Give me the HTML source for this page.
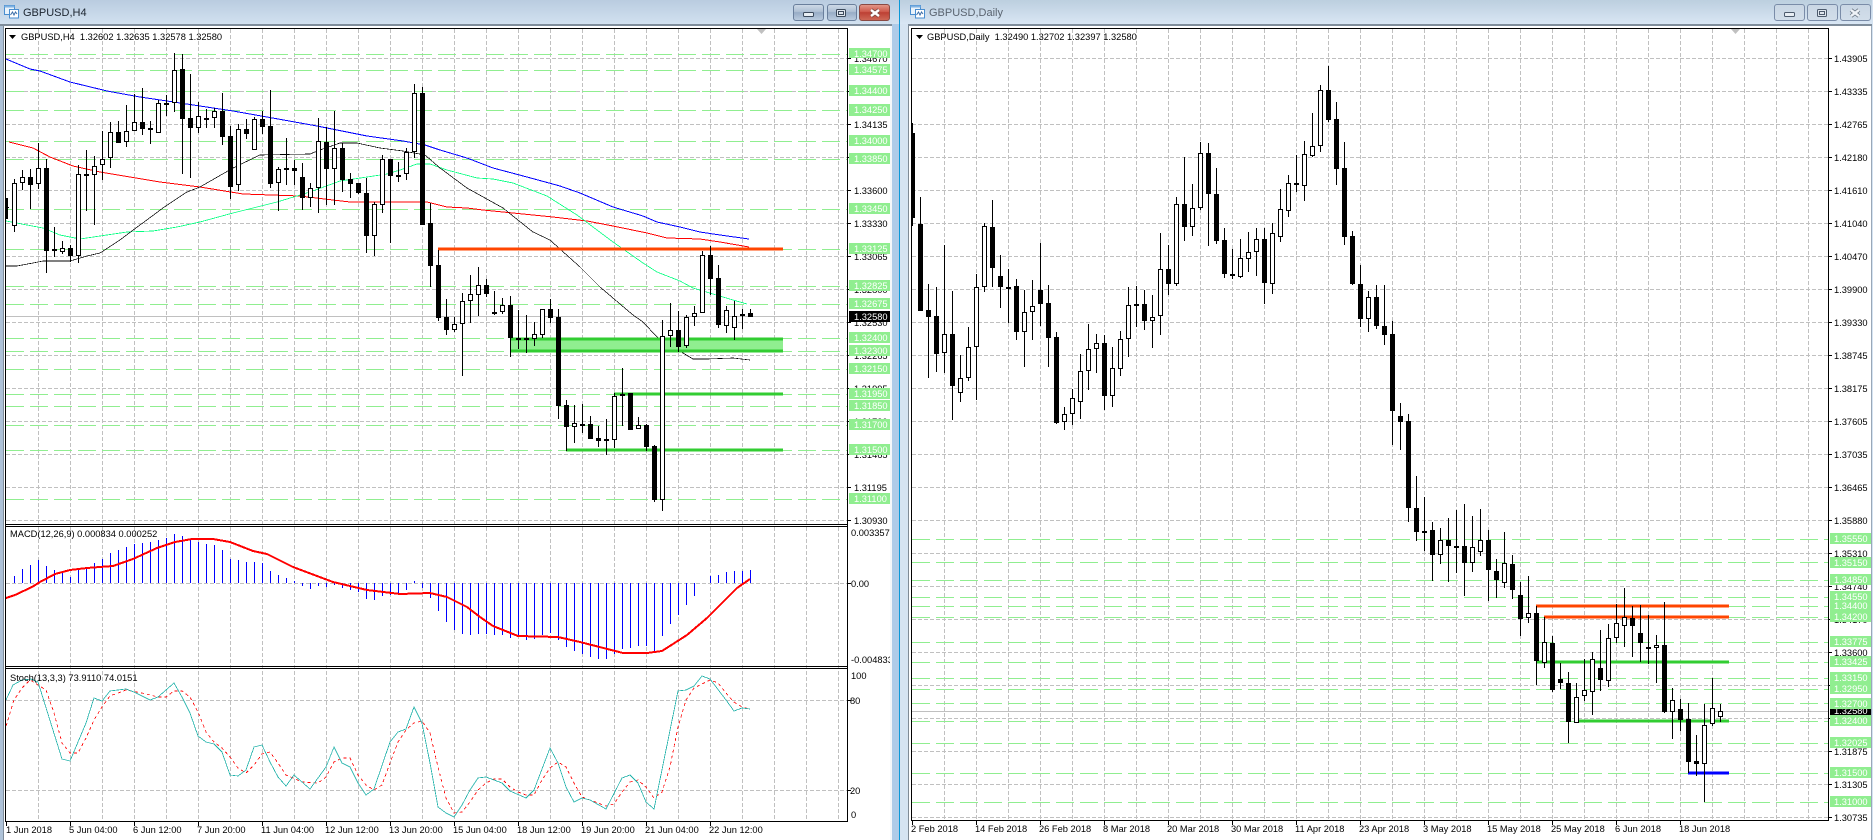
<!DOCTYPE html>
<html lang="en"><head><meta charset="utf-8"><title>GBPUSD charts</title>
<style>
html,body{margin:0;padding:0;background:#fff;width:1873px;height:840px;overflow:hidden}
svg{display:block;position:absolute;left:0;top:0}
text{font-family:"Liberation Sans",sans-serif;font-size:9.3px;fill:#000}
.t{font-size:11px;fill:#1c2530}
.ti{font-size:11px;fill:#5a6470}
.w{fill:#fff}
</style></head><body>
<svg width="1873" height="840" viewBox="0 0 1873 840" xmlns="http://www.w3.org/2000/svg">
<defs>
<linearGradient id="tb" x1="0" y1="0" x2="0" y2="1"><stop offset="0" stop-color="#b9cce0"/><stop offset="1" stop-color="#d2e1f0"/></linearGradient>
<linearGradient id="tb2" x1="0" y1="0" x2="0" y2="1"><stop offset="0" stop-color="#bccfdf"/><stop offset="1" stop-color="#d9e6f4"/></linearGradient>
<linearGradient id="ba" x1="0" y1="0" x2="0" y2="1"><stop offset="0" stop-color="#d0dbe8"/><stop offset=".45" stop-color="#aebfd3"/><stop offset=".5" stop-color="#97acc6"/><stop offset="1" stop-color="#bccde0"/></linearGradient>
<linearGradient id="bi" x1="0" y1="0" x2="0" y2="1"><stop offset="0" stop-color="#c9d6e4"/><stop offset="1" stop-color="#d2deea"/></linearGradient>
<linearGradient id="bc" x1="0" y1="0" x2="0" y2="1"><stop offset="0" stop-color="#e39a8c"/><stop offset=".45" stop-color="#cf5a4c"/><stop offset=".5" stop-color="#bd4034"/><stop offset="1" stop-color="#cf6a58"/></linearGradient>
</defs>

<rect width="1873" height="840" fill="#fff"/>

<!-- title bars -->
<rect x="0" y="0" width="900" height="24" fill="url(#tb)"/>
<rect x="900" y="0" width="973" height="24" fill="url(#tb2)"/>
<rect x="0" y="24" width="892" height="2" fill="#7f8d9b"/>
<rect x="908" y="24" width="964" height="2" fill="#7f8d9b"/>

<!-- left window grid -->
<g shape-rendering="crispEdges" fill="none" stroke-width="1">
<path stroke="#c0c0c0" stroke-dasharray="4 2" d="M38.5 29V821M70.5 29V821M102.5 29V821M134.5 29V821M166.5 29V821M198.5 29V821M230.5 29V821M262.5 29V821M294.5 29V821M326.5 29V821M358.5 29V821M390.5 29V821M422.5 29V821M454.5 29V821M486.5 29V821M518.5 29V821M550.5 29V821M582.5 29V821M614.5 29V821M646.5 29V821M678.5 29V821M710.5 29V821M742.5 29V821M774.5 29V821M806.5 29V821M838.5 29V821"/>
<path stroke="#c0c0c0" stroke-dasharray="4 2" d="M6 58.5H847M6 91.5H847M6 124.5H847M6 157.5H847M6 190.5H847M6 223.5H847M6 256.5H847M6 289.5H847M6 322.5H847M6 355.5H847M6 388.5H847M6 421.5H847M6 454.5H847M6 487.5H847M6 520.5H847M6 583.5H847M6 700.5H847M6 790.5H847"/>
<path stroke="#90ee90" stroke-dasharray="18 6" d="M6 54.5H847M6 70.5H847M6 91.5H847M6 110.5H847M6 141.5H847M6 159.5H847M6 209.5H847M6 249.5H847M6 286.5H847M6 304.5H847M6 338.5H847M6 351.5H847M6 369.5H847M6 394.5H847M6 406.5H847M6 425.5H847M6 450.5H847M6 499.5H847"/>
<path stroke="#c0c0c0" d="M6 316.5H847"/>

<!-- MAs left -->
<polyline stroke="#0000ff" points="6,59 30,69 40,71 70,82 107,91 140,97 167,101 200,106 233,111 267,117 317,126 367,136 403,141 425,145 440,150 467,158 493,168 527,177 560,186 580,193 613,207 643,216 657,222 680,227 700,232 720,235 749,239"/>
<polyline stroke="#ff0000" points="9,142 33,148 50,157 73,166 100,172 160,182 200,187 243,194 300,196 333,200 350,202 385,202 427,202 447,207 467,208 483,210 513,213 553,217 587,221 613,226 647,233 667,238 700,239 720,242 749,247"/>
<polyline stroke="#00ff7f" stroke-width=".8" points="6,221 27,225 43,228 60,235 80,239 100,236 127,232 153,231 177,227 200,222 233,213 277,202 310,192 340,181 367,177 387,174 400,170 417,164 430,164 447,170 477,178 493,179 513,183 547,196 577,215 613,242 643,263 657,272 680,281 693,288 733,300 747,304"/>
<polyline stroke="#000" stroke-width=".7" points="6,266 17,266 33,263 43,261 70,261 87,256 100,253 120,240 140,225 163,208 187,192 200,187 233,168 260,155 310,154 320,150 340,143 357,143 380,148 403,151 425,155 440,168 467,188 503,208 533,232 550,240 580,267 600,287 633,315 643,322 657,337 678,350 693,359 707,359 733,358 750,360"/>

<!-- objects left -->
<rect x="510" y="338" width="273" height="14" fill="#90ee90" stroke="none"/>
<path stroke="#32cd32" stroke-width="3" d="M510 339H783M510 351H783M614 394H783M566 450H783"/>
<path stroke="#ff4500" stroke-width="3" d="M438 249H783"/>

<!-- candles left -->
<rect x="6" y="198" width="2" height="21" fill="#000" stroke="none"/><rect x="6" y="207" width="3" height="1" fill="#000" stroke="none"/>
<path stroke="#000" d="M14.5 179V232M22.5 170V190M30.5 169V209M38.5 143V189M46.5 159V273M54.5 227V257M62.5 241V254M70.5 245V262M78.5 165V263M86.5 150V211M94.5 156V225M102.5 131V180M110.5 122V168M118.5 121V143M126.5 105V147M134.5 94V131M142.5 88V135M150.5 121V144M158.5 100V133M166.5 95V116M174.5 53V112M182.5 54V174M190.5 74V178M198.5 102V133M206.5 109V128M214.5 108V128M222.5 93V145M230.5 126V199M238.5 124V191M246.5 119V139M254.5 117V150M262.5 111V134M270.5 90V188M278.5 167V211M286.5 138V185M294.5 160V185M302.5 163V210M310.5 183V207M318.5 118V213M326.5 127V205M334.5 111V205M342.5 143V192M350.5 173V198M358.5 183V194M366.5 178V253M374.5 202V256M382.5 155V213M390.5 159V243M398.5 162V182M406.5 148V180M414.5 84V158M422.5 87V225M430.5 203V287M438.5 250V321M446.5 299V335M454.5 317V332M462.5 293V376M470.5 275V323M478.5 267V316M486.5 279V297M494.5 291V315M502.5 298V314M510.5 296V357M518.5 310V349M526.5 315V353M534.5 322V346M542.5 309V338M550.5 299V323M558.5 309V419M566.5 400V451M574.5 405V443M582.5 404V433M590.5 416V439M598.5 426V447M606.5 419V455M614.5 393V448M622.5 368V426M630.5 393V430M638.5 417V429M646.5 424V451M654.5 445V502M662.5 320V511M670.5 303V347M678.5 311V352M686.5 315V348M694.5 306V326M702.5 251V313M710.5 246V295M718.5 265V328M726.5 306V333M734.5 301V340M742.5 309V329M750.5 309V317"/>
<path stroke="#000" stroke-width="5" d="M30.5 177V185M46.5 168V251M70.5 248V256M86.5 174V176M118.5 132V143M142.5 122V129M182.5 69V119M190.5 118V128M222.5 111V137M230.5 136V187M246.5 129V134M262.5 119V127M270.5 126V184M286.5 168V170M294.5 168V171M302.5 177V198M326.5 142V169M342.5 148V180M350.5 179V184M358.5 183V193M366.5 193V236M390.5 159V176M422.5 93V225M430.5 223V266M438.5 265V318M446.5 317V330M486.5 285V294M510.5 305V338M550.5 309V318M558.5 317V406M566.5 405V427M590.5 424V439M598.5 438V441M606.5 439V441M630.5 393V430M646.5 425V447M654.5 446V500M678.5 330V347M710.5 255V279M718.5 278V325M750.5 313V317M54.5 249V251M150.5 128V130M166.5 103V105M206.5 118V120M398.5 175V177M494.5 312V314M518.5 338V340M526.5 338V340M582.5 424V426"/>
<path stroke="#000" fill="#fff" d="M12.5 183.5h4v42h-4zM20.5 177.5h4v5h-4zM36.5 168.5h4v15h-4zM60.5 248.5h4v3h-4zM76.5 174.5h4v81h-4zM92.5 166.5h4v8h-4zM100.5 159.5h4v5h-4zM108.5 132.5h4v25h-4zM124.5 131.5h4v10h-4zM132.5 122.5h4v8h-4zM156.5 103.5h4v29h-4zM172.5 70.5h4v32h-4zM196.5 116.5h4v11h-4zM212.5 111.5h4v6h-4zM236.5 129.5h4v55h-4zM252.5 119.5h4v30h-4zM276.5 169.5h4v13h-4zM308.5 188.5h4v9h-4zM316.5 141.5h4v46h-4zM332.5 148.5h4v20h-4zM372.5 204.5h4v31h-4zM380.5 159.5h4v45h-4zM404.5 152.5h4v21h-4zM412.5 93.5h4v58h-4zM452.5 324.5h4v5h-4zM460.5 301.5h4v22h-4zM468.5 294.5h4v6h-4zM476.5 285.5h4v9h-4zM500.5 305.5h4v6h-4zM532.5 334.5h4v4h-4zM540.5 309.5h4v25h-4zM572.5 423.5h4v3h-4zM612.5 396.5h4v43h-4zM620.5 394.5h4v1h-4zM636.5 425.5h4v3h-4zM660.5 336.5h4v163h-4zM668.5 330.5h4v5h-4zM684.5 317.5h4v28h-4zM692.5 313.5h4v3h-4zM700.5 255.5h4v57h-4zM724.5 310.5h4v15h-4zM732.5 316.5h4v11h-4zM740.5 314.5h4v1h-4z"/>

<!-- MACD -->
<path stroke="#0000ff" d="M14.5 583V576M22.5 583V569M30.5 583V565M38.5 583V560M46.5 583V566M54.5 583V570M62.5 583V573M70.5 583V577M78.5 583V568M86.5 583V568M94.5 583V563M102.5 583V559M110.5 583V553M118.5 583V550M126.5 583V547M134.5 583V544M142.5 583V543M150.5 583V542M158.5 583V540M166.5 583V538M174.5 583V534M182.5 583V536M190.5 583V540M198.5 583V542M206.5 583V544M214.5 583V545M222.5 583V550M230.5 583V559M238.5 583V560M246.5 583V562M254.5 583V562M262.5 583V563M270.5 583V571M278.5 583V575M286.5 583V578M294.5 583V581M302.5 583V586M310.5 583V589M318.5 583V586M326.5 583V587M334.5 583V585M342.5 583V588M350.5 583V590M358.5 583V592M366.5 583V599M374.5 583V600M382.5 583V596M390.5 583V595M398.5 583V594M406.5 583V590M414.5 583V581M422.5 583V588M430.5 583V598M438.5 583V611M446.5 583V622M454.5 583V630M462.5 583V634M470.5 583V635M478.5 583V634M486.5 583V634M494.5 583V635M502.5 583V635M510.5 583V638M518.5 583V637M526.5 583V640M534.5 583V639M542.5 583V635M550.5 583V633M558.5 583V640M566.5 583V647M574.5 583V651M582.5 583V654M590.5 583V657M598.5 583V659M606.5 583V659M614.5 583V654M622.5 583V649M630.5 583V648M638.5 583V646M646.5 583V646M654.5 583V652M662.5 583V636M670.5 583V624M678.5 583V615M686.5 583V605M694.5 583V596M710.5 583V576M718.5 583V575M726.5 583V572M734.5 583V571M742.5 583V571M750.5 583V570"/>
<polyline stroke="#ff0000" stroke-width="2" points="6,598 15,595 32,587 40,582 55,574 70,570 87,568 113,566 133,559 157,548 175,542 192,539 213,539 230,542 253,551 267,554 293,567 333,582 367,590 400,594 430,593 447,597 467,607 480,617 493,626 518,636 558,637 580,642 623,653 647,653 662,651 687,635 707,618 737,588 750,579"/>

<!-- Stoch -->
<polyline stroke="#ff0000" stroke-dasharray="3 3" stroke-width=".8" points="6,726 14,700 22,688 30,680 46,690 54,713 62,743 70,753 78,753 86,738 94,720 102,707 110,696 118,693 126,690 142,693 158,697 166,697 174,691 182,691 190,697 198,712 206,732 214,742 222,748 230,757 238,768 246,773 254,765 262,754 270,752 278,763 286,775 302,782 318,783 326,777 334,762 342,758 350,758 358,775 366,785 374,790 382,785 390,763 398,742 406,730 414,723 422,721 430,733 438,767 446,798 454,813 462,812 470,802 478,790 486,783 494,779 502,779 510,787 518,792 526,795 534,795 542,780 550,768 558,762 566,767 574,783 582,797 590,800 606,806 614,804 622,792 630,782 638,780 646,787 654,798 662,792 670,767 678,727 686,700 694,688 702,684 710,680 718,683 726,693 734,702 742,707 750,709"/>
<polyline stroke="#20b2aa" stroke-width=".8" points="6,700 13,685 22,680 31,679 38,682 62,759 70,761 86,723 94,698 102,701 110,691 126,689 134,692 150,700 158,697 174,683 182,697 190,713 198,736 206,742 214,744 222,752 230,775 238,776 246,770 254,747 262,745 270,762 278,777 286,786 294,775 302,782 310,789 326,767 334,747 342,763 350,767 358,783 366,795 374,789 390,742 398,732 406,729 414,707 422,723 430,763 438,807 446,813 454,817 462,805 470,790 478,778 486,777 502,783 510,791 526,798 534,790 550,748 558,763 566,787 574,802 582,798 590,800 606,809 622,778 630,775 638,783 646,802 654,809 678,691 686,690 694,686 702,676 710,679 726,700 734,711 742,708 750,709"/>

<!-- left frame -->
<path stroke="#000" d="M5.5 28.5H847.5V821M5.5 28V821.5H848M5 524.5H848M5 526.5H848M5 666.5H848M5 668.5H848"/>
<path stroke="#000" d="M848 58.5h3M848 91.5h3M848 124.5h3M848 157.5h3M848 190.5h3M848 223.5h3M848 256.5h3M848 289.5h3M848 322.5h3M848 355.5h3M848 388.5h3M848 421.5h3M848 454.5h3M848 487.5h3M848 520.5h3M848 583.5h3M848 700.5h3M848 790.5h3M6.5 822v4M70.5 822v4M134.5 822v4M198.5 822v4M262.5 822v4M326.5 822v4M390.5 822v4M454.5 822v4M518.5 822v4M582.5 822v4M646.5 822v4M710.5 822v4"/>
</g>
<polygon points="757,29 766,29 761.5,34" fill="#c0c0c0"/>
<polygon points="9,35 16,35 12.5,39" fill="#000"/>
<text x="21" y="40">GBPUSD,H4&#160;&#160;1.32602 1.32635 1.32578 1.32580</text>
<text x="10" y="537">MACD(12,26,9) 0.000834 0.000252</text>
<text x="10" y="681">Stoch(13,3,3) 73.9110 74.0151</text>

<!-- left axis black labels -->
<g>
<text x="854" y="62">1.34670</text><text x="854" y="95">1.34400</text><text x="854" y="128">1.34135</text><text x="854" y="161">1.33870</text><text x="854" y="194">1.33600</text><text x="854" y="227">1.33330</text><text x="854" y="260">1.33065</text><text x="854" y="293">1.32800</text><text x="854" y="326">1.32530</text><text x="854" y="359">1.32265</text><text x="854" y="392">1.31995</text><text x="854" y="425">1.31730</text><text x="854" y="458">1.31465</text><text x="854" y="491">1.31195</text><text x="854" y="524">1.30930</text>
<text x="851" y="536">0.003357</text><text x="851" y="587">0.00</text><text x="851" y="663">-0.004833</text>
<text x="851" y="679">100</text><text x="850" y="704">80</text><text x="850" y="794">20</text><text x="851" y="818">0</text>
</g>
<!-- left green boxes -->
<g fill="#90ee90" shape-rendering="crispEdges">
<rect x="849" y="48" width="41" height="10"/><rect x="849" y="64" width="41" height="11"/><rect x="849" y="85" width="41" height="11"/><rect x="849" y="104" width="41" height="12"/><rect x="849" y="135" width="41" height="11"/><rect x="849" y="153" width="41" height="11"/><rect x="849" y="203" width="41" height="11"/><rect x="849" y="243" width="41" height="11"/><rect x="849" y="280" width="41" height="11"/><rect x="849" y="298" width="41" height="11"/><rect x="849" y="332" width="41" height="11"/><rect x="849" y="345" width="41" height="11"/><rect x="849" y="363" width="41" height="11"/><rect x="849" y="388" width="41" height="11"/><rect x="849" y="400" width="41" height="11"/><rect x="849" y="419" width="41" height="11"/><rect x="849" y="444" width="41" height="11"/><rect x="849" y="493" width="41" height="11"/>
</g>
<g class="w">
<text class="w" x="854" y="57">1.34700</text><text class="w" x="854" y="73">1.34575</text><text class="w" x="854" y="94">1.34400</text><text class="w" x="854" y="113">1.34250</text><text class="w" x="854" y="144">1.34000</text><text class="w" x="854" y="162">1.33850</text><text class="w" x="854" y="212">1.33450</text><text class="w" x="854" y="252">1.33125</text><text class="w" x="854" y="289">1.32825</text><text class="w" x="854" y="307">1.32675</text><text class="w" x="854" y="341">1.32400</text><text class="w" x="854" y="354">1.32300</text><text class="w" x="854" y="372">1.32150</text><text class="w" x="854" y="397">1.31950</text><text class="w" x="854" y="409">1.31850</text><text class="w" x="854" y="428">1.31700</text><text class="w" x="854" y="453">1.31500</text><text class="w" x="854" y="502">1.31100</text>
</g>
<rect x="849" y="311" width="41" height="11" fill="#000"/>
<text class="w" x="854" y="320">1.32580</text>
<g>
<text x="6" y="833">1 Jun 2018</text><text x="69" y="833">5 Jun 04:00</text><text x="133" y="833">6 Jun 12:00</text><text x="197" y="833">7 Jun 20:00</text><text x="261" y="833">11 Jun 04:00</text><text x="325" y="833">12 Jun 12:00</text><text x="389" y="833">13 Jun 20:00</text><text x="453" y="833">15 Jun 04:00</text><text x="517" y="833">18 Jun 12:00</text><text x="581" y="833">19 Jun 20:00</text><text x="645" y="833">21 Jun 04:00</text><text x="709" y="833">22 Jun 12:00</text>
</g>

<!-- RIGHT chart -->
<g shape-rendering="crispEdges" fill="none" stroke-width="1">
<path stroke="#c0c0c0" stroke-dasharray="4 2" d="M944.5 29V820M976.5 29V820M1008.5 29V820M1040.5 29V820M1072.5 29V820M1104.5 29V820M1136.5 29V820M1168.5 29V820M1200.5 29V820M1232.5 29V820M1264.5 29V820M1296.5 29V820M1328.5 29V820M1360.5 29V820M1392.5 29V820M1424.5 29V820M1456.5 29V820M1488.5 29V820M1520.5 29V820M1552.5 29V820M1584.5 29V820M1616.5 29V820M1648.5 29V820M1680.5 29V820M1712.5 29V820M1744.5 29V820M1776.5 29V820M1808.5 29V820"/>
<path stroke="#c0c0c0" stroke-dasharray="4 2" d="M912 58.5H1828M912 91.5H1828M912 124.5H1828M912 157.5H1828M912 190.5H1828M912 223.5H1828M912 256.5H1828M912 289.5H1828M912 322.5H1828M912 355.5H1828M912 388.5H1828M912 421.5H1828M912 454.5H1828M912 487.5H1828M912 520.5H1828M912 553.5H1828M912 586.5H1828M912 619.5H1828M912 652.5H1828M912 685.5H1828M912 718.5H1828M912 751.5H1828M912 784.5H1828M912 817.5H1828"/>
<path stroke="#90ee90" stroke-dasharray="18 6" d="M912 539.5H1828M912 562.5H1828M912 580.5H1828M912 597.5H1828M912 606.5H1828M912 617.5H1828M912 642.5H1828M912 662.5H1828M912 678.5H1828M912 689.5H1828M912 703.5H1828M912 721.5H1828M912 743.5H1828M912 773.5H1828M912 802.5H1828"/>
<path stroke="#c0c0c0" d="M912 711.5H1828"/>
<path stroke="#ff4500" stroke-width="3" d="M1536 606H1729M1544 617H1729"/>
<path stroke="#32cd32" stroke-width="3" d="M1536 662H1729M1576 721H1729"/>
<path stroke="#0000ff" stroke-width="3" d="M1688 773H1729"/>

<path stroke="#000" d="M912.5 123V226M920.5 197V311M928.5 284V378M936.5 287V372M944.5 245V373M952.5 291V420M960.5 355V402M968.5 327V381M976.5 274V400M984.5 223V292M992.5 200V287M1000.5 255V308M1008.5 269V323M1016.5 279V340M1024.5 290V367M1032.5 280V340M1040.5 243V326M1048.5 285V367M1056.5 332V424M1064.5 407V430M1072.5 389V425M1080.5 354V419M1088.5 324V390M1096.5 334V373M1104.5 335V410M1112.5 347V407M1120.5 331V376M1128.5 287V357M1136.5 286V327M1144.5 290V330M1152.5 295V348M1160.5 233V335M1168.5 245V295M1176.5 197V286M1184.5 157V241M1192.5 184V236M1200.5 142V210M1208.5 143V246M1216.5 168V244M1224.5 228V278M1232.5 249V279M1240.5 239V278M1248.5 232V272M1256.5 228V276M1264.5 228V304M1272.5 223V294M1280.5 189V242M1288.5 175V217M1296.5 155V192M1304.5 141V201M1312.5 113V157M1320.5 85V152M1328.5 66V122M1336.5 102V185M1344.5 142V245M1352.5 231V285M1360.5 265V327M1368.5 291V332M1376.5 285V329M1384.5 285V345M1392.5 321V445M1400.5 403V450M1408.5 414V522M1416.5 476V541M1424.5 497V551M1432.5 522V581M1440.5 528V564M1448.5 518V582M1456.5 510V573M1464.5 504V596M1472.5 516V572M1480.5 509V556M1488.5 530V601M1496.5 559V598M1504.5 532V588M1512.5 555V599M1520.5 582V636M1528.5 576V623M1536.5 606V685M1544.5 617V668M1552.5 636V692M1560.5 663V689M1568.5 672V743M1576.5 683V723M1584.5 659V701M1592.5 652V715M1600.5 630V691M1608.5 624V687M1616.5 604V643M1624.5 588V647M1632.5 606V657M1640.5 605V662M1648.5 615V664M1656.5 635V683M1664.5 602V713M1672.5 688V739M1680.5 699V731M1688.5 703V773M1696.5 735V776M1704.5 704V802M1712.5 678V726M1720.5 704V722"/>
<rect x="912" y="133" width="3" height="85" fill="#000" stroke="none"/>
<path stroke="#000" stroke-width="5" d="M920.5 224V311M928.5 310V317M936.5 316V354M952.5 334V386M992.5 227V268M1000.5 276V287M1016.5 286V332M1040.5 290V304M1048.5 303V338M1056.5 337V423M1104.5 343V396M1144.5 304V321M1168.5 269V284M1184.5 204V227M1208.5 153V194M1216.5 194V241M1224.5 240V274M1264.5 239V283M1328.5 90V120M1336.5 119V169M1344.5 168V237M1352.5 236V284M1360.5 284V319M1376.5 297V326M1384.5 326V335M1392.5 334V411M1400.5 416V422M1408.5 421V508M1416.5 508V532M1432.5 530V555M1448.5 540V546M1464.5 546V563M1488.5 540V570M1496.5 571V580M1512.5 564V590M1520.5 595V619M1536.5 613V661M1552.5 643V690M1560.5 679V683M1568.5 683V722M1600.5 668V680M1632.5 618V626M1640.5 633V643M1664.5 645V712M1680.5 709V720M1688.5 719V762M1696.5 761V764M1008.5 287V289M1136.5 304V306M1232.5 274V276M1296.5 183V185M1424.5 531V533M1456.5 546V548M1648.5 647V649"/>
<path stroke="#000" fill="#fff" d="M942.5 334.5h4v18h-4zM958.5 378.5h4v14h-4zM966.5 347.5h4v30h-4zM974.5 287.5h4v59h-4zM982.5 226.5h4v60h-4zM1022.5 312.5h4v19h-4zM1030.5 306.5h4v5h-4zM1062.5 414.5h4v7h-4zM1070.5 398.5h4v15h-4zM1078.5 371.5h4v30h-4zM1086.5 349.5h4v21h-4zM1094.5 343.5h4v5h-4zM1110.5 368.5h4v27h-4zM1118.5 339.5h4v29h-4zM1126.5 305.5h4v33h-4zM1150.5 317.5h4v3h-4zM1158.5 269.5h4v46h-4zM1174.5 204.5h4v79h-4zM1190.5 208.5h4v18h-4zM1198.5 153.5h4v54h-4zM1238.5 258.5h4v18h-4zM1246.5 252.5h4v6h-4zM1254.5 239.5h4v12h-4zM1270.5 233.5h4v50h-4zM1278.5 209.5h4v27h-4zM1286.5 183.5h4v27h-4zM1302.5 154.5h4v31h-4zM1310.5 146.5h4v9h-4zM1318.5 90.5h4v55h-4zM1366.5 297.5h4v21h-4zM1438.5 540.5h4v14h-4zM1470.5 547.5h4v15h-4zM1478.5 540.5h4v11h-4zM1502.5 563.5h4v19h-4zM1526.5 613.5h4v4h-4zM1542.5 642.5h4v20h-4zM1574.5 697.5h4v25h-4zM1582.5 690.5h4v5h-4zM1590.5 659.5h4v32h-4zM1606.5 638.5h4v42h-4zM1614.5 623.5h4v14h-4zM1622.5 617.5h4v8h-4zM1654.5 645.5h4v2h-4zM1670.5 700.5h4v11h-4zM1702.5 725.5h4v38h-4zM1710.5 708.5h4v15h-4zM1718.5 711.5h4v5h-4z"/>

<path stroke="#000" d="M911.5 28.5H1828.5V820.5H911.5ZM1829 58.5h3M1829 91.5h3M1829 124.5h3M1829 157.5h3M1829 190.5h3M1829 223.5h3M1829 256.5h3M1829 289.5h3M1829 322.5h3M1829 355.5h3M1829 388.5h3M1829 421.5h3M1829 454.5h3M1829 487.5h3M1829 520.5h3M1829 553.5h3M1829 586.5h3M1829 619.5h3M1829 652.5h3M1829 685.5h3M1829 718.5h3M1829 751.5h3M1829 784.5h3M1829 817.5h3M912.5 821v4M976.5 821v4M1040.5 821v4M1104.5 821v4M1168.5 821v4M1232.5 821v4M1296.5 821v4M1360.5 821v4M1424.5 821v4M1488.5 821v4M1552.5 821v4M1616.5 821v4M1680.5 821v4"/>
</g>
<polygon points="1731,29 1740,29 1735.5,34" fill="#c0c0c0"/>
<polygon points="916,35 923,35 919.5,39" fill="#000"/>
<text x="927" y="40">GBPUSD,Daily&#160;&#160;1.32490 1.32702 1.32397 1.32580</text>

<g>
<text x="1834" y="62">1.43905</text><text x="1834" y="95">1.43335</text><text x="1834" y="128">1.42765</text><text x="1834" y="161">1.42180</text><text x="1834" y="194">1.41610</text><text x="1834" y="227">1.41040</text><text x="1834" y="260">1.40470</text><text x="1834" y="293">1.39900</text><text x="1834" y="326">1.39330</text><text x="1834" y="359">1.38745</text><text x="1834" y="392">1.38175</text><text x="1834" y="425">1.37605</text><text x="1834" y="458">1.37035</text><text x="1834" y="491">1.36465</text><text x="1834" y="524">1.35880</text><text x="1834" y="557">1.35310</text><text x="1834" y="590">1.34740</text><text x="1834" y="623">1.34170</text><text x="1834" y="656">1.33600</text><text x="1834" y="689">1.33030</text><text x="1834" y="722">1.32445</text><text x="1834" y="755">1.31875</text><text x="1834" y="788">1.31305</text><text x="1834" y="821">1.30735</text>
</g>
<rect x="1830" y="705" width="41" height="11" fill="#000"/>
<text class="w" x="1834" y="714">1.32580</text>
<g fill="#90ee90" shape-rendering="crispEdges">
<rect x="1830" y="533" width="41" height="11"/><rect x="1830" y="557" width="41" height="11"/><rect x="1830" y="574" width="41" height="11"/><rect x="1830" y="591" width="41" height="11"/><rect x="1830" y="600" width="41" height="11"/><rect x="1830" y="611" width="41" height="11"/><rect x="1830" y="636" width="41" height="11"/><rect x="1830" y="656" width="41" height="11"/><rect x="1830" y="672" width="41" height="11"/><rect x="1830" y="683" width="41" height="11"/><rect x="1830" y="698" width="41" height="11"/><rect x="1830" y="715" width="41" height="11"/><rect x="1830" y="737" width="41" height="11"/><rect x="1830" y="767" width="41" height="11"/><rect x="1830" y="796" width="41" height="11"/>
</g>
<g>
<text class="w" x="1834" y="542">1.35550</text><text class="w" x="1834" y="566">1.35150</text><text class="w" x="1834" y="583">1.34850</text><text class="w" x="1834" y="600">1.34550</text><text class="w" x="1834" y="609">1.34400</text><text class="w" x="1834" y="620">1.34200</text><text class="w" x="1834" y="645">1.33775</text><text class="w" x="1834" y="665">1.33425</text><text class="w" x="1834" y="681">1.33150</text><text class="w" x="1834" y="692">1.32950</text><text class="w" x="1834" y="707">1.32700</text><text class="w" x="1834" y="724">1.32400</text><text class="w" x="1834" y="746">1.32025</text><text class="w" x="1834" y="776">1.31500</text><text class="w" x="1834" y="805">1.31000</text>
</g>
<g>
<text x="911" y="832">2 Feb 2018</text><text x="975" y="832">14 Feb 2018</text><text x="1039" y="832">26 Feb 2018</text><text x="1103" y="832">8 Mar 2018</text><text x="1167" y="832">20 Mar 2018</text><text x="1231" y="832">30 Mar 2018</text><text x="1295" y="832">11 Apr 2018</text><text x="1359" y="832">23 Apr 2018</text><text x="1423" y="832">3 May 2018</text><text x="1487" y="832">15 May 2018</text><text x="1551" y="832">25 May 2018</text><text x="1615" y="832">6 Jun 2018</text><text x="1679" y="832">18 Jun 2018</text>
</g>

<!-- chrome strips -->
<g shape-rendering="crispEdges">
<rect x="0" y="26" width="3" height="814" fill="#aec2d8"/>
<rect x="3" y="26" width="1" height="814" fill="#7f8c9a"/>
<rect x="4" y="26" width="1" height="814" fill="#fff"/>
<rect x="890" y="26" width="2" height="814" fill="#f4f7fa"/>
<rect x="892" y="24" width="7" height="816" fill="#aecbe8"/>
<rect x="899" y="0" width="1" height="840" fill="#0a98d8"/>
<rect x="900" y="24" width="8" height="816" fill="#d6e4f2"/>
<rect x="908" y="26" width="1" height="814" fill="#808b96"/>
<rect x="909" y="26" width="2" height="814" fill="#fff"/>
<rect x="1871" y="26" width="1" height="814" fill="#9aa8b8"/>
<rect x="1872" y="0" width="1" height="840" fill="#d6e4f2"/>
</g>

<!-- window icons -->
<g>
<rect x="4.5" y="5.5" width="10" height="9" fill="#eaf3fb" stroke="#4a8ed0"/>
<rect x="4.5" y="5.5" width="10" height="2" fill="#7fb2e2"/>
<rect x="9.5" y="9.5" width="9" height="8.5" fill="#fff" stroke="#4a8ed0"/>
<path d="M10.5 15l2-3 1.5 3 1.5-3 1.5 2" fill="none" stroke="#3c6ea8"/>
<rect x="910.5" y="5.5" width="10" height="9" fill="#eaf3fb" stroke="#4a8ed0"/>
<rect x="910.5" y="5.5" width="10" height="2" fill="#7fb2e2"/>
<rect x="915.5" y="9.5" width="9" height="8.5" fill="#fff" stroke="#4a8ed0"/>
<path d="M916.5 15l2-3 1.5 3 1.5-3 1.5 2" fill="none" stroke="#3c6ea8"/>
</g>
<text class="t" x="23" y="16">GBPUSD,H4</text>
<text class="ti" x="929" y="16">GBPUSD,Daily</text>

<!-- left buttons -->
<rect x="793.5" y="4.5" width="30" height="16" rx="2.5" fill="url(#ba)" stroke="#6a7f9c"/>
<rect x="827.5" y="4.5" width="29" height="16" rx="2.5" fill="url(#ba)" stroke="#6a7f9c"/>
<rect x="859.5" y="4.5" width="30" height="16" rx="2.5" fill="url(#bc)" stroke="#8a4a44"/>
<rect x="803.5" y="12.5" width="10" height="4" rx="1" fill="#e8eef4" stroke="#3c4a5c"/>
<rect x="836.5" y="9.5" width="9" height="7" rx="1" fill="#dfe6ee" stroke="#3c4a5c"/>
<rect x="838.5" y="11.5" width="5" height="3" fill="none" stroke="#3c4a5c"/>
<path d="M871 10l8 6M879 10l-8 6" stroke="#7a4a44" stroke-width="4" fill="none"/>
<path d="M871 10l8 6M879 10l-8 6" stroke="#fff" stroke-width="2.4" fill="none"/>

<!-- right buttons -->
<rect x="1774.5" y="4.5" width="30" height="16" rx="2.5" fill="url(#bi)" stroke="#7a8ca8"/>
<rect x="1807.5" y="4.5" width="30" height="16" rx="2.5" fill="url(#bi)" stroke="#7a8ca8"/>
<rect x="1840.5" y="4.5" width="30" height="16" rx="2.5" fill="url(#bi)" stroke="#7a8ca8"/>
<rect x="1784.5" y="12.5" width="10" height="4" rx="1" fill="#e8eef4" stroke="#4c5a6c"/>
<rect x="1817.5" y="9.5" width="9" height="7" rx="1" fill="#dfe6ee" stroke="#4c5a6c"/>
<rect x="1819.5" y="11.5" width="5" height="3" fill="none" stroke="#4c5a6c"/>
<path d="M1851 10l8 6M1859 10l-8 6" stroke="#6a7684" stroke-width="4" fill="none"/>
<path d="M1851 10l8 6M1859 10l-8 6" stroke="#eef2f6" stroke-width="2.4" fill="none"/>
</svg>
</body></html>
